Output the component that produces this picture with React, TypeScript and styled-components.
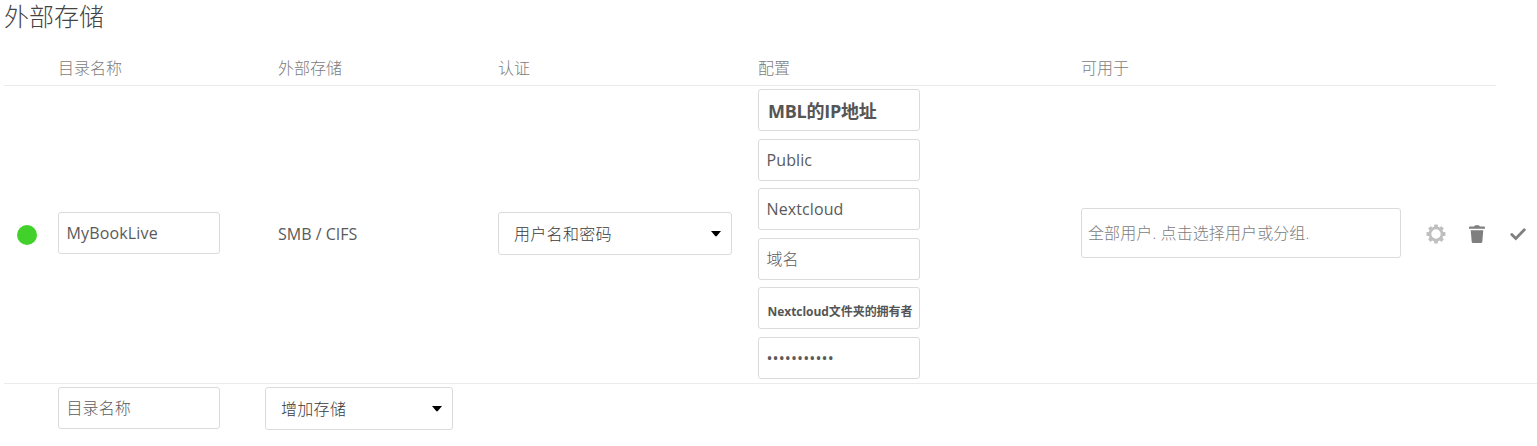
import React from 'react';
import styled, { createGlobalStyle } from 'styled-components';

const GlobalStyle = createGlobalStyle`
  * { box-sizing: border-box; }
  body {
    margin: 0;
    background: #fff;
    color: #444;
    font: 300 16px/20px "Open Sans", "Noto Sans CJK SC", sans-serif;
    overflow: hidden;
  }
`;

const Page = styled.main`
  width: 1537px;
  height: 446px;
  padding-left: 4px;
`;

const Title = styled.h2`
  margin: 0;
  height: 50px;
  font-size: 25px;
  font-weight: 300;
  line-height: 32px;
  color: #444;
`;

const Row = styled.div`
  display: grid;
  grid-template-columns: 54px 220px 220px 260px 323px 320px 1fr;
  align-items: center;
`;

const HeaderRow = styled(Row)`
  width: 1492px;
  height: 36px;
  border-bottom: 1px solid #ebebeb;
  color: #7c7c7c;
`;

const MountRow = styled(Row)`
  height: 298px;
  border-bottom: 1px solid #ebebeb;
`;

const AddRow = styled.div`
  display: flex;
  align-items: flex-start;
  gap: 45px;
  padding: 3px 0 0 54px;
`;

const StatusDot = styled.span`
  width: 20px;
  height: 20px;
  margin: 1px 0 0 13px;
  border-radius: 50%;
  background: #41d12a;
`;

const Field = styled.div<{ $muted?: boolean; $lift?: number }>`
  display: flex;
  align-items: center;
  width: 162px;
  height: 42px;
  padding: 0 7.5px;
  margin-bottom: ${(p) => p.$lift ?? 0}px;
  border: 1px solid #dbdbdb;
  border-radius: 3px;
  white-space: nowrap;
  letter-spacing: 0.1px;
  color: ${(p) => (p.$muted ? '#5c5c5c' : '#3a3a3a')};
`;

const UsersField = styled(Field)`
  width: 320px;
  height: 50px;
  padding-left: 6px;
  color: #7c7c7c;
`;

const SelectBox = styled(Field)<{ $width: number }>`
  justify-content: space-between;
  width: ${(p) => p.$width}px;
  height: 43px;
  padding: 1px 10px 0 15px;
  letter-spacing: 0.3px;
`;

const Caret = styled.svg`
  display: block;
  margin-bottom: 1px;
`;

const ConfigList = styled.div`
  display: flex;
  flex-direction: column;
  justify-content: space-between;
  height: 290px;
  margin-bottom: 1px;
`;

const Note = styled.strong<{ $size: number; $top: number; $left: number; $spacing: number }>`
  font-family: "Open Sans", "Noto Sans CJK SC", sans-serif;
  font-size: ${(p) => p.$size}px;
  font-weight: 700;
  color: #555;
  letter-spacing: ${(p) => p.$spacing}px;
  padding: ${(p) => p.$top}px 0 0 ${(p) => p.$left}px;
`;

const Latin = styled.span<{ $lift?: number; $spacing?: number }>`
  font-weight: 400;
  color: #5a5a5a;
  letter-spacing: ${(p) => p.$spacing ?? 0.1}px;
  padding-bottom: ${(p) => p.$lift ?? 0}px;
`;

const Actions = styled.div`
  display: flex;
  align-items: center;
  padding: 0 0 2px 25px;
  gap: 21px;
`;

const Icon = styled.svg`
  display: block;
  flex: none;
  width: 20px;
  height: 20px;
`;

function Select({ label, width, lift }: { label: string; width: number; lift?: number }) {
  return (
    <SelectBox $width={width} $lift={lift}>
      <span>{label}</span>
      <Caret width="10" height="6" viewBox="0 0 10 6">
        <path d="M0 0h10L5.8 5Q5 5.8 4.2 5z" fill="#000" />
      </Caret>
    </SelectBox>
  );
}

const teeth = [0, 45, 90, 135, 180, 225, 270, 315];

export default function App() {
  return (
    <>
      <GlobalStyle />
      <Page>
        <Title>外部存储</Title>
        <HeaderRow>
          <span />
          <span>目录名称</span>
          <span>外部存储</span>
          <span>认证</span>
          <span>配置</span>
          <span>可用于</span>
        </HeaderRow>
        <MountRow>
          <StatusDot />
          <Field $lift={3}><Latin $spacing={0.15}>MyBookLive</Latin></Field>
          <Latin $lift={2} $spacing={0}>SMB / CIFS</Latin>
          <Select label="用户名和密码" width={234} lift={2} />
          <ConfigList>
            <Field><Note $size={18} $top={2} $left={1.5} $spacing={-0.25}>MBL的IP地址</Note></Field>
            <Field><Latin>Public</Latin></Field>
            <Field><Latin>Nextcloud</Latin></Field>
            <Field $muted>域名</Field>
            <Field><Note $size={12} $top={8} $left={1} $spacing={-0.05}>Nextcloud文件夹的拥有者</Note></Field>
            <Field><Latin>•••••••••••</Latin></Field>
          </ConfigList>
          <UsersField $lift={3}>全部用户. 点击选择用户或分组.</UsersField>
          <Actions>
            <Icon viewBox="0 0 20 20">
              <g fill="#bfbfbf">
                {teeth.map((a) => (
                  <rect key={a} x="8.1" y="0.5" width="3.8" height="4" rx="0.7" transform={`rotate(${a} 10 10)`} />
                ))}
              </g>
              <circle cx="10" cy="10" r="6.1" fill="none" stroke="#bfbfbf" strokeWidth="2.800" />
            </Icon>
            <Icon viewBox="0 0 20 20">
              <path d="M8 1.2h4l.8 1.2H17q1 0 1 1v1.4H2V3.400q0-1 1-1h4.200zM3.700 6.200h12.600l-1 11.500q-.1 1.200-1.300 1.200H6q-1.200 0-1.300-1.200z" fill="#7f7f7f" />
            </Icon>
            <Icon viewBox="0 0 20 20">
              <path d="M3.800 10.400l4 4L16.300 5.800" fill="none" stroke="#7f7f7f" strokeWidth="2.800" strokeLinecap="round" />
            </Icon>
          </Actions>
        </MountRow>
        <AddRow>
          <Field $muted>目录名称</Field>
          <Select label="增加存储" width={188} />
        </AddRow>
      </Page>
    </>
  );
}
